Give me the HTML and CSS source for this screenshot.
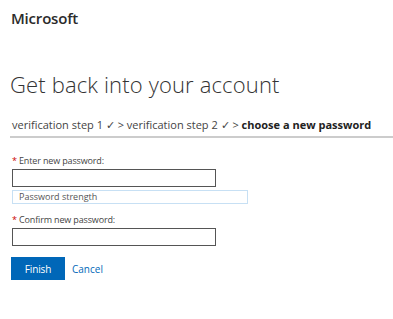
FILE: index.html
```html
<!DOCTYPE html>
<html lang="en">
<head>
    <meta charset="UTF-8">
    <meta name="viewport" content="width=device-width, initial-scale=1.0">
    <title>Get back into your account</title>
    <link rel="stylesheet" href="styles.css">
</head>
<body>
    <div class="header">
        <span class="logo">Microsoft</span>
    </div>
    <div class="container">
        <h1>Get back into your account</h1>
        <div class="steps">
            verification step 1 &#10003; &gt; verification step 2 &#10003; &gt; <b>choose a new password</b>
        </div>
        <div class="form">
            <label class="field-label"><span class="req">*</span> Enter new password:</label>
            <input type="password" class="text-input">
            <div class="strength">Password strength</div>
            <label class="field-label confirm"><span class="req">*</span> Confirm new password:</label>
            <input type="password" class="text-input">
            <div class="actions">
                <button class="finish">Finish</button>
                <a href="#" class="cancel">Cancel</a>
            </div>
        </div>
    </div>
</body>
</html>
```

FILE: styles.css
```css
body {
    font-family: "Open Sans", "Noto Sans", sans-serif;
    margin: 0;
    background-color: #fff;
    color: #333;
}
.header {
    padding: 7px 11px 0;
    height: 32px;
}
.logo {
    font-size: 15px;
    font-weight: 600;
    color: #2b2b2b;
    letter-spacing: -0.2px;
}
.container {
    padding-left: 10px;
}
h1 {
    font-size: 22px;
    font-weight: 300;
    margin: 29px 0 0 0;
    line-height: 32px;
    color: #333;
    letter-spacing: 0.15px;
}
.steps {
    font-size: 11px;
    color: #444;
    margin-top: 17px;
    padding: 0 2px 4px;
    border-bottom: 2px solid #ccc;
    white-space: nowrap;
}
.steps b {
    font-weight: 700;
    color: #222;
}
.form {
    padding-left: 2px;
    padding-top: 16px;
}
.field-label {
    display: block;
    font-size: 9px;
    letter-spacing: -0.15px;
    color: #444;
    line-height: 14px;
}
.req {
    color: #c00;
}
.text-input {
    display: block;
    box-sizing: border-box;
    width: 204px;
    height: 18px;
    margin: 1px 0 0;
    border: 1px solid #555;
    padding: 0 4px;
}
.strength {
    box-sizing: border-box;
    width: 236px;
    height: 14px;
    margin-top: 3px;
    border: 1px solid #c7e0f4;
    font-size: 9px;
    line-height: 12px;
    padding-left: 6px;
    color: #555;
}
.confirm {
    margin-top: 9px;
}
.actions {
    display: flex;
    align-items: center;
    margin-top: 11px;
    margin-left: -1px;
}
.finish {
    width: 54px;
    height: 23px;
    padding: 0;
    background-color: #0067b8;
    color: white;
    border: none;
    font-family: inherit;
    font-size: 10px;
    letter-spacing: -0.1px;
}
.cancel {
    margin-left: 7px;
    font-size: 10px;
    color: #0067b8;
    text-decoration: none;
}
```
